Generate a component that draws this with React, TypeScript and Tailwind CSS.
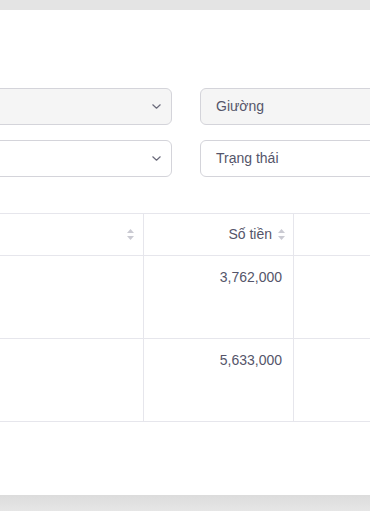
import React from "react";

const Chevron = () => (
  <svg width="9" height="5" viewBox="0 0 9 5" fill="none" className="shrink-0">
    <path d="M0.8 0.8l3.7 3.4 3.7-3.4" stroke="#6b6b7b" strokeWidth="1.2" strokeLinecap="round" strokeLinejoin="round" />
  </svg>
);

const Sort = () => (
  <svg width="9" height="13" viewBox="0 0 9 13" className="shrink-0">
    <path d="M4.5 1L8 5H1z" fill="#cacad2" />
    <path d="M4.5 12L8 8H1z" fill="#cacad2" />
  </svg>
);

export default function App() {
  return (
    <div
      className="w-[370px] h-[511px] overflow-hidden bg-[#e4e4e4] flex flex-col"
      style={{ fontFamily: '"Liberation Sans", Arial, sans-serif' }}
    >
      <div className="h-[10px] shrink-0 bg-[#e4e4e4]" />
      <div className="h-[485px] shrink-0 bg-white flex flex-col">
        <div className="mt-[78px] flex flex-col gap-[15px]">
          <div className="flex gap-[28px] -ml-[30px]">
            <div className="w-[202px] h-[37px] shrink-0 rounded-[6px] border border-[#d4d4da] bg-[#f5f5f5] flex items-center justify-end pr-[10px]">
              <Chevron />
            </div>
            <div className="w-[200px] h-[37px] shrink-0 rounded-[6px] border border-[#d4d4da] bg-[#f5f5f5] flex items-center pl-[15px] text-[14px] text-[#55556a]">
              Giường
            </div>
          </div>
          <div className="flex gap-[28px] -ml-[30px]">
            <div className="w-[202px] h-[37px] shrink-0 rounded-[6px] border border-[#d4d4da] bg-white flex items-center justify-end pr-[10px]">
              <Chevron />
            </div>
            <div className="w-[200px] h-[37px] shrink-0 rounded-[6px] border border-[#d4d4da] bg-white flex items-center pl-[15px] text-[14px] text-[#55556a]">
              Trạng thái
            </div>
          </div>
        </div>
        <div className="mt-[36px] border-t border-[#e6e6ec] flex flex-col text-[14px] text-[#55556a]">
          <div className="flex h-[42px] border-b border-[#e6e6ec]">
            <div className="w-[144px] shrink-0 border-r border-[#e6e6ec] flex items-center justify-end pr-[8px]">
              <Sort />
            </div>
            <div className="w-[150px] shrink-0 border-r border-[#e6e6ec] flex items-center justify-end gap-[5px] pr-[7px]">
              <span>Số tiền</span>
              <Sort />
            </div>
            <div className="flex-1" />
          </div>
          <div className="flex h-[83px] border-b border-[#e6e6ec]">
            <div className="w-[144px] shrink-0 border-r border-[#e6e6ec]" />
            <div className="w-[150px] shrink-0 border-r border-[#e6e6ec] flex justify-end pr-[11px] pt-[11px]">
              3,762,000
            </div>
            <div className="flex-1" />
          </div>
          <div className="flex h-[83px] border-b border-[#e6e6ec]">
            <div className="w-[144px] shrink-0 border-r border-[#e6e6ec]" />
            <div className="w-[150px] shrink-0 border-r border-[#e6e6ec] flex justify-end pr-[11px] pt-[11px]">
              5,633,000
            </div>
            <div className="flex-1" />
          </div>
        </div>
      </div>
      <div className="flex-1 bg-gradient-to-b from-[#dcdcdc] to-[#e6e6e6]" />
    </div>
  );
}
